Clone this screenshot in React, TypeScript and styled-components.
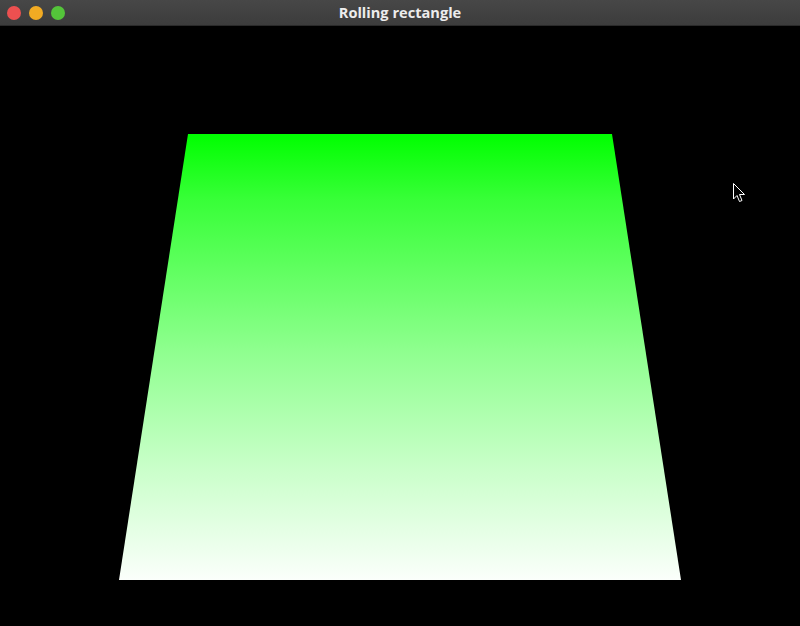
import React from "react";
import styled, { createGlobalStyle } from "styled-components";

const Global = createGlobalStyle`
  html, body { margin: 0; padding: 0; background: #000; }
  #root { width: 800px; height: 626px; }
`;

const Window = styled.div`
  width: 800px;
  height: 626px;
  display: flex;
  flex-direction: column;
  background: #000;
  overflow: hidden;
`;

const TitleBar = styled.div`
  height: 26px;
  flex: 0 0 26px;
  background: linear-gradient(#474747, #3c3c3c);
  display: flex;
  align-items: center;
  position: relative;
  border-bottom: 1px solid #2a2a2a;
  box-sizing: border-box;
`;

const Lights = styled.div`
  display: flex;
  gap: 8px;
  padding-left: 7px;
`;

const Light = styled.span<{ $c: string }>`
  width: 14px;
  height: 14px;
  border-radius: 50%;
  background: ${(p) => p.$c};
`;

const Title = styled.div`
  position: absolute;
  left: 0;
  right: 0;
  text-align: center;
  color: #ececec;
  font-family: "Open Sans", "DejaVu Sans", sans-serif;
  font-weight: 700;
  font-size: 14.6px;
  line-height: 25px;
`;

const Canvas = styled.div`
  flex: 1;
  position: relative;
  background: #000;
`;

const Scene = styled.svg`
  display: block;
  width: 800px;
  height: 600px;
`;

const Cursor = styled.svg`
  position: absolute;
  left: 733px;
  top: 157px;
`;

export default function App() {
  return (
    <>
      <Global />
      <Window>
        <TitleBar>
          <Lights>
            <Light $c="#ec5050" />
            <Light $c="#f2ab23" />
            <Light $c="#54c43a" />
          </Lights>
          <Title>Rolling rectangle</Title>
        </TitleBar>
        <Canvas>
          <Scene viewBox="0 0 800 600">
            <defs>
              <linearGradient id="g" x1="0" y1="0" x2="0" y2="1">
                <stop offset="0" stopColor="#00ff00" />
                <stop offset="0.148" stopColor="#38ff38" />
                <stop offset="0.484" stopColor="#8eff8e" />
                <stop offset="0.753" stopColor="#caffca" />
                <stop offset="1" stopColor="#fbfffb" />
              </linearGradient>
            </defs>
            <polygon points="188,108 612,108 681,554 119,554" fill="url(#g)" />
          </Scene>
          <Cursor width="14" height="22" viewBox="0 0 14 22">
            <path
              d="M0.5 0.5 L0.5 16 L4 12.5 L6.5 18.5 L9 17.5 L6.5 11.5 L11.5 11.5 Z"
              fill="#000"
              stroke="#fff"
              strokeWidth="1"
              strokeLinejoin="round"
            />
          </Cursor>
        </Canvas>
      </Window>
    </>
  );
}
